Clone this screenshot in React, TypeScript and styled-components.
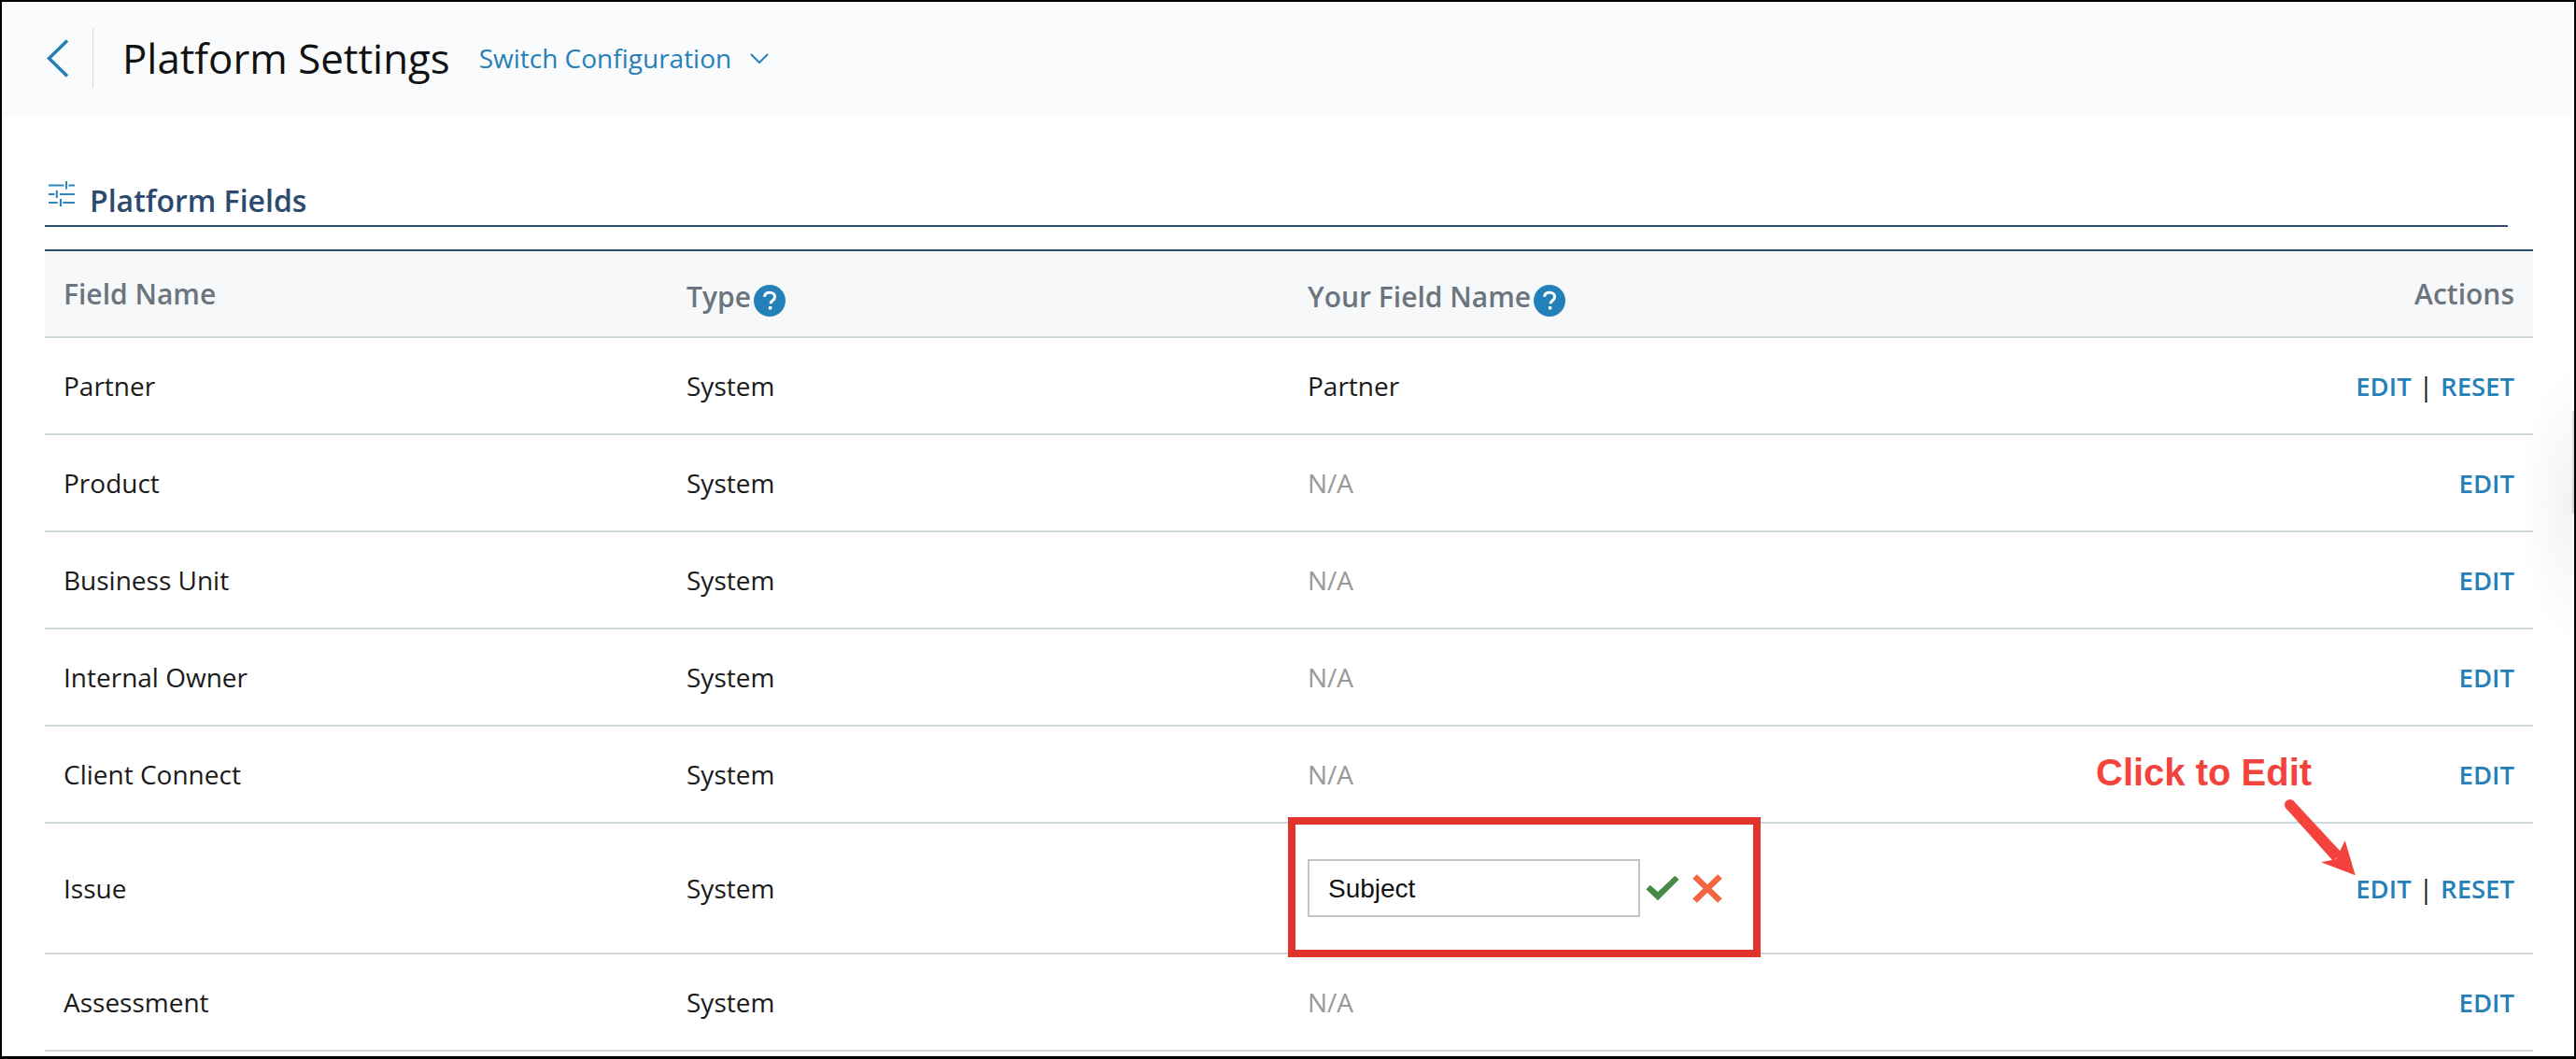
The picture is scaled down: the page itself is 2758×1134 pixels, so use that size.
import styled, { createGlobalStyle } from "styled-components";

const GlobalStyle = createGlobalStyle`
  html, body {
    margin: 0;
    padding: 0;
    background: #fff;
  }
  * {
    box-sizing: border-box;
  }
`;

const Frame = styled.div`
  position: relative;
  width: 2758px;
  height: 1134px;
  overflow: hidden;
  background: #fff;
  border-style: solid;
  border-color: #000;
  border-width: 2px 2px 3px 2px;
  font-family: "Open Sans", sans-serif;
`;

const Header = styled.header`
  display: flex;
  align-items: center;
  height: 124px;
  padding: 0 0 5px 48px;
  background: #fafbfd;
`;

const BackIcon = styled.svg`
  width: 24px;
  height: 41px;
  margin-top: 2px;
  flex: none;
`;

const Divider = styled.div`
  width: 1px;
  height: 64px;
  margin: 0 31px 0 25px;
  background: #d5dadd;
`;

const Title = styled.h1`
  margin: 0;
  font-size: 43.8px;
  font-weight: 400;
  color: #111;
`;

const Switcher = styled.div`
  display: flex;
  align-items: center;
  margin-left: 31px;
  font-size: 28px;
  color: #2580b8;
`;

const ChevronDown = styled.svg`
  width: 20px;
  height: 11px;
  margin-left: 20px;
  margin-top: 2px;
`;

const Body = styled.main`
  padding: 61px 44px 0 46px;
`;

const SectionHeading = styled.div`
  display: flex;
  align-items: center;
  gap: 16px;
  width: 2637px;
  height: 56px;
  padding-left: 4px;
  border-bottom: 2px solid #2e4d70;

  svg {
    margin-top: -13px;
  }
`;

const SectionTitle = styled.h2`
  margin: 0;
  font-size: 32px;
  font-weight: 600;
  color: #2c4a6e;
`;

const Table = styled.div`
  margin-top: 24px;
  border-top: 2px solid #2e4d70;
`;

const Row = styled.div<{ $tall?: boolean; $head?: boolean }>`
  display: grid;
  grid-template-columns: 667px 665px 1fr auto;
  align-items: center;
  height: ${({ $tall, $head }) => ($tall ? "140px" : $head ? "93px" : "104px")};
  padding: 0 20px;
  border-bottom: 2px solid #cfd8dc;
  background: ${({ $head }) => ($head ? "#f6f8fa" : "transparent")};
  font-size: 28px;
  color: #1a1a1a;
`;

const HeadCell = styled.div<{ $help?: boolean }>`
  display: flex;
  align-items: center;
  gap: 3px;
  padding-top: ${({ $help }) => ($help ? "6px" : "0")};
  font-size: 30px;
  font-weight: 600;
  color: #6c757d;
`;

const HelpIcon = styled.svg`
  width: 34px;
  height: 34px;
  margin-top: 8px;
  flex: none;
`;

const Muted = styled.span`
  color: #999;
`;

const Actions = styled.div`
  display: flex;
  justify-content: flex-end;
  align-items: center;
  color: #111;
`;

const ActionLink = styled.a`
  font-size: 27.5px;
  font-weight: 600;
  color: #2580b8;
`;

const Separator = styled.span`
  margin: 0 8px;
`;

const EditCell = styled.div`
  position: relative;
  display: flex;
  align-items: center;
`;

const NameInput = styled.input`
  width: 356px;
  height: 62px;
  padding: 2px 20px 0;
  border: 2px solid #c4c4c4;
  outline: none;
  font-family: "Liberation Sans", sans-serif;
  font-size: 28px;
  color: #111;
`;

const ConfirmIcon = styled.svg`
  width: 36px;
  height: 28px;
  margin-left: 6px;
`;

const CancelIcon = styled.svg`
  width: 32px;
  height: 31px;
  margin-left: 14px;
`;

const Highlight = styled.div`
  position: absolute;
  left: -21px;
  top: -45px;
  width: 506px;
  height: 150px;
  border: 8px solid #e0332c;
  pointer-events: none;
`;

const CalloutText = styled.div`
  position: absolute;
  left: 2242px;
  top: 803px;
  font-family: "Liberation Sans", sans-serif;
  font-size: 40px;
  font-weight: 700;
  color: #f4423c;
`;

const CalloutArrow = styled.svg`
  position: absolute;
  left: 2428px;
  top: 848px;
  width: 110px;
  height: 100px;
`;

const EdgeShadow = styled.div`
  position: absolute;
  right: 0;
  top: 388px;
  width: 60px;
  height: 300px;
  pointer-events: none;
  background:
    linear-gradient(to left, rgba(0, 0, 0, 0.18), transparent 5%) no-repeat right 50px / 100% 110px,
    radial-gradient(ellipse 100% 50% at right center, rgba(0, 0, 0, 0.05), transparent);
`;

const fields = [
  { name: "Partner", value: "Partner", reset: true },
  { name: "Product" },
  { name: "Business Unit" },
  { name: "Internal Owner" },
  { name: "Client Connect" },
  { name: "Issue", editing: true, reset: true },
  { name: "Assessment" },
];

function Help() {
  return (
    <HelpIcon viewBox="0 0 34 34">
      <circle cx="17" cy="17" r="17" fill="#2380b8" />
      <path
        d="M11.5 12.8c.3-3 2.600-4.600 5.600-4.600 3.200 0 5.500 1.800 5.500 4.600 0 2-1 3.100-2.600 4.200-1.400 1-1.900 1.600-1.900 3.200"
        fill="none"
        stroke="#fff"
        strokeWidth="3"
      />
      <rect x="15.900" y="23" width="3.400" height="3.400" fill="#fff" />
    </HelpIcon>
  );
}

function TuneIcon() {
  return (
    <svg width="28" height="27" viewBox="0 0 28 27" fill="none" stroke="#2b86bd" strokeWidth="2">
      <path d="M0 4.500h16.500M21.500 4.500H28M19 0v8.500" />
      <path d="M0 14h6.500M12 14h16M8.800 9.700V18" />
      <path d="M0 23h9.700M15.300 23H28M13 19v8" />
    </svg>
  );
}

export default function App() {
  return (
    <>
      <GlobalStyle />
      <Frame>
        <Header>
          <BackIcon viewBox="0 0 24 41">
            <polyline points="22,1.500 2.500,20.500 22,39.500" fill="none" stroke="#2580b8" strokeWidth="3.500" />
          </BackIcon>
          <Divider />
          <Title>Platform Settings</Title>
          <Switcher>
            Switch Configuration
            <ChevronDown viewBox="0 0 20 11">
              <polyline points="1,1 10,10 19,1" fill="none" stroke="#2580b8" strokeWidth="2" />
            </ChevronDown>
          </Switcher>
        </Header>
        <Body>
          <SectionHeading>
            <TuneIcon />
            <SectionTitle>Platform Fields</SectionTitle>
          </SectionHeading>
          <Table>
            <Row $head>
              <HeadCell>Field Name</HeadCell>
              <HeadCell $help>
                Type
                <Help />
              </HeadCell>
              <HeadCell $help>
                Your Field Name
                <Help />
              </HeadCell>
              <HeadCell>Actions</HeadCell>
            </Row>
            {fields.map((field) => (
              <Row key={field.name} $tall={field.editing}>
                <div>{field.name}</div>
                <div>System</div>
                {field.editing ? (
                  <EditCell>
                    <Highlight />
                    <NameInput defaultValue="Subject" />
                    <ConfirmIcon viewBox="0 0 36 28">
                      <polygon points="0.300,15.300 4.700,10.700 13,18 31.300,0.700 35.700,4.700 13,27.300" fill="#478a47" />
                    </ConfirmIcon>
                    <CancelIcon viewBox="0 0 32 31">
                      <path d="M2.500 2.500L29.500 28.500M29.500 2.500L2.500 28.500" fill="none" stroke="#f26640" strokeWidth="6.500" />
                    </CancelIcon>
                  </EditCell>
                ) : (
                  <div>{field.value ?? <Muted>N/A</Muted>}</div>
                )}
                <Actions>
                  <ActionLink>EDIT</ActionLink>
                  {field.reset && (
                    <>
                      <Separator>|</Separator>
                      <ActionLink>RESET</ActionLink>
                    </>
                  )}
                </Actions>
              </Row>
            ))}
          </Table>
        </Body>
        <CalloutText>Click to Edit</CalloutText>
        <CalloutArrow viewBox="0 0 110 100">
          <path d="M17.500 15.500L68 72L77 63L25.500 7.500Z" fill="#f4423c" />
          <circle cx="21.700" cy="11.700" r="5.700" fill="#f4423c" />
          <path d="M91.700 87.300L55 73.300L71 70L80.700 50Z" fill="#f4423c" />
        </CalloutArrow>
        <EdgeShadow />
      </Frame>
    </>
  );
}
